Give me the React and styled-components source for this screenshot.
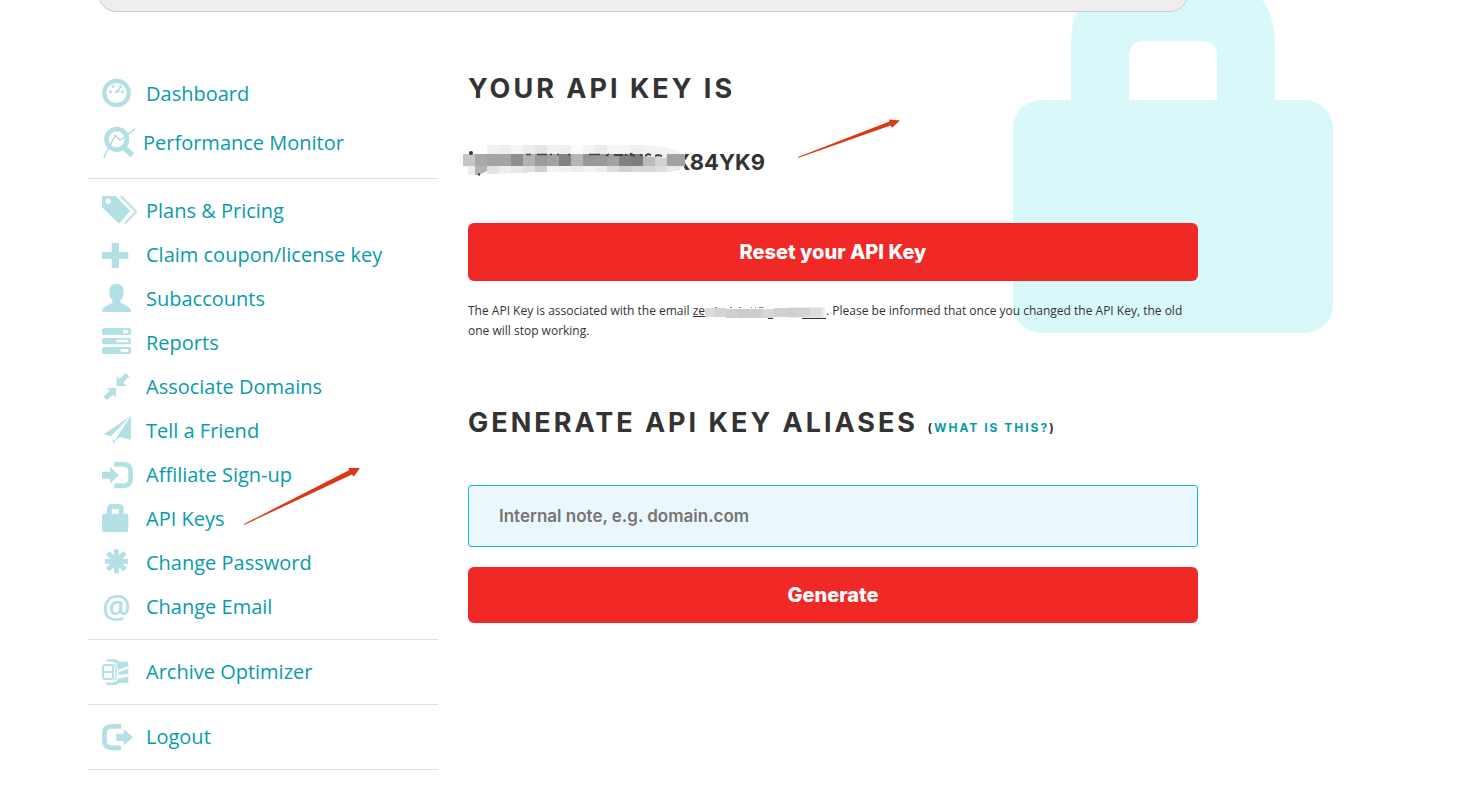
import React from "react";
import styled, { createGlobalStyle } from "styled-components";

const icons = {
  dashboard: (
    <>
      <circle cx="14.5" cy="17" r="12.2" fill="none" stroke="#b2e0e5" strokeWidth="4.2" />
      <circle cx="11" cy="10.5" r="1.5" />
      <circle cx="18.5" cy="10.5" r="1.5" />
      <circle cx="8.6" cy="15.8" r="1.5" />
      <circle cx="20.6" cy="15.8" r="1.5" />
      <path d="M19 10.5 16.6 16.6 13 17.2 13.4 15Z" />
    </>
  ),
  performance: (
    <>
      <path d="M1.7 32.7 13.3 10.3 18 15 21 13.3 33 3.7" fill="none" stroke="#b4cfd3" strokeWidth="1.3" />
      <circle cx="14.7" cy="14.3" r="10.3" fill="none" stroke="#b2e0e5" strokeWidth="4.6" />
      <path d="M22 22.5 30.5 30.3" stroke="#b2e0e5" strokeWidth="5.6" />
    </>
  ),
  tags: (
    <>
      <path
        fillRule="evenodd"
        d="M0 3H13.7L28.2 17.7 17 30.7 0 14ZM6.3 5.7a2.6 2.6 0 1 0 0 5.2 2.6 2.6 0 0 0 0-5.2Z"
      />
      <path d="M17.6 3H20.3L35.3 18.7 23.8 31 22.5 29.8 32.8 18.7Z" />
    </>
  ),
  plus: <path d="M9.7 6H17V15H26.3V22H17V31H9.7V22H0V15H9.7Z" />,
  person: (
    <path d="M14.5 2.7C19 2.7 21.7 5.5 21.7 10.5 21.7 14.5 20.5 17.5 18.5 19.3V21.5L27.5 26.7Q29 28 29 31H0Q0 28 1.5 26.7L10.5 21.5V19.3C8.5 17.5 7.3 14.5 7.3 10.5 7.3 5.5 10 2.7 14.5 2.7Z" />
  ),
  reports: (
    <>
      <rect y="3" width="29" height="7" rx="2" />
      <rect y="13" width="29" height="6.3" rx="2" />
      <rect y="22" width="29" height="7" rx="2" />
      <rect x="21" y="5" width="5.3" height="3.2" rx="0.5" fill="#fff" />
      <rect x="14.3" y="14.8" width="12" height="2.4" rx="0.5" fill="#fff" />
      <rect x="18.7" y="24" width="7.6" height="3" rx="0.5" fill="#fff" />
    </>
  ),
  associate: (
    <>
      <path d="M14.5 7.3 17.5 10 24 4 27.3 7.2 21.2 13.5 24.2 17H14.5Z" />
      <path d="M14 28.5 11 25.5 5 31 1.6 27.8 7.8 22 4.5 19H14Z" />
    </>
  ),
  plane: (
    <>
      <path d="M1.7 21.3 28.7 3 8.8 23.6Z" />
      <path d="M28.7 3V26.7L18 23.7 10.8 30.5V24.5L12.5 28 26.5 7Z" />
      <path d="M28.7 3V26.7L16.2 23Z" />
    </>
  ),
  signup: (
    <>
      <path d="M0 14.7H8V9.7L16.7 18.2 8 26.7V21.7H0Z" />
      <path d="M12.3 7.3H21Q28.6 7.3 28.6 14V22.3Q28.6 28.8 21 28.8H12.3" fill="none" stroke="#b2e0e5" strokeWidth="4.7" />
    </>
  ),
  lock: (
    <path
      fillRule="evenodd"
      d="M2.3 12.7H5V8Q5 3 10 3H16.7Q21.7 3 21.7 8V12.7H24Q26.3 12.7 26.3 15V28.7Q26.3 31 24 31H2.3Q0 31 0 28.7V15Q0 12.7 2.3 12.7ZM9.7 12.7H16.8V9.3Q16.8 8 15.5 8H11Q9.7 8 9.7 9.3Z"
    />
  ),
  asterisk: (
    <path
      d="M14.4 4.3V28.3M2.8 16.3H26M5.8 7.8 23 24.8M23 7.8 5.8 24.8"
      stroke="#b2e0e5"
      strokeWidth="4.8"
    />
  ),
  at: (
    <text x="0" y="29" fontFamily="Open Sans, sans-serif" fontSize="32" fontWeight="600">
      @
    </text>
  ),
  archive: (
    <>
      <rect x="1" y="11" width="10" height="14" rx="2" fill="none" stroke="#b2e0e5" strokeWidth="2" />
      <path d="M1 18H11" stroke="#b2e0e5" strokeWidth="2" />
      <path d="M3.5 7.5 5 5.2H14L17 7.7H26.3V12L16 16 14.5 9 11 7.5Z" />
      <path d="M16.5 18.2 26.3 14.8V20L16.5 20.8Z" />
      <path d="M3.5 28.5 5 31H14L17 29H26.3V22.7L16 24.5 14 28 11 28.6Z" />
      <path d="M12 10 14 12V24L12 26.5" fill="none" stroke="#b2e0e5" strokeWidth="1.4" />
    </>
  ),
  logout: (
    <>
      <path d="M19 7.3H10Q2.4 7.3 2.4 14V22.3Q2.4 28.8 10 28.8H19" fill="none" stroke="#b2e0e5" strokeWidth="4.7" />
      <path d="M14.3 14.7H21.7V10L31 18.2 21.7 26.5V22H14.3Z" />
    </>
  )
};

const account = [
  ["tags", "Plans & Pricing"],
  ["plus", "Claim coupon/license key"],
  ["person", "Subaccounts"],
  ["reports", "Reports"],
  ["associate", "Associate Domains"],
  ["plane", "Tell a Friend"],
  ["signup", "Affiliate Sign-up"],
  ["lock", "API Keys"],
  ["asterisk", "Change Password"],
  ["at", "Change Email"]
];

const keyBlocks = [
  "#c6c6c6", "#a8a8a8", "#a4a4a4", "#a4a4a4", "#8f8f8f", "#b2b2b2",
  "#9b9b9b", "#a2a2a2", "#828282", "#b5b5b5", "#979797", "#989898",
  "#a2a2a2", "#828282", "#7d7d7d", "#bababa", "#d2d2d2", "#a2a2a2"
];

const keyTops = [
  "#f1f1f1", "#ededed", "#f5f5f5", "#ececec", "#e5e5e5", "#f2f2f2", "#eee",
  "#fbfbfb", "#f3f3f3", "#ebebeb", "#f7f7f7", "#f5f5f5", "#eee", "#f2f2f2",
  "#f2f2f2", "#f4f4f4"
];

const keyBottoms = [
  "#ededed", "#b2b2b2", "#e3e3e3", "#eee", "#e9e9e9", "#e0e0e0", "#cfcfcf",
  "#f3f3f3", "#f1f1f1", "#ececec", "#f3f3f3", "#eee", "#dcdcdc", "#d0d0d0",
  "#d8d8d8", "#d6d6d6", "#dedede", "#eaeaea"
];

const mailBlocks = [
  "#dadada", "#d4d4d4", "#cfcfcf", "#cbcbcb", "#cecece",
  "#d6d6d6", "#d0d0d0", "#cfcfcf", "#d3d3d3", "#dedede"
];

function NavItem({ icon, iconWidth, children }) {
  return (
    <li>
      <NavLink href="#">
        <IconSlot $width={iconWidth}>
          <svg width="36" height="36" viewBox="0 0 36 36" fill="#b2e0e5" aria-hidden="true">
            {icons[icon]}
          </svg>
        </IconSlot>
        <NavLabel>{children}</NavLabel>
      </NavLink>
    </li>
  );
}

function KeyMask() {
  return (
    <MaskArt width="222" height="32" viewBox="0 0 222 32" aria-hidden="true">
      <clipPath id="key-brush">
        <path d="M0 10H24V1H180Q216 3 222 12V22Q216 28 198 28H72L24 30V27L16 31H5V23H0Z" />
      </clipPath>
      <g clipPath="url(#key-brush)">
        {keyTops.map((fill, i) => (
          <rect key={i} x={24 + i * 12} y="0" width="12" height="10" fill={fill} />
        ))}
        {keyBlocks.map((fill, i) => (
          <rect key={i} x={i * 12} y="10" width="18" height="12" fill={fill} />
        ))}
        {keyBottoms.map((fill, i) => (
          <rect key={i} x={i * 12} y="22" width="18" height="9" fill={fill} />
        ))}
        <path d="M180 10H204L203 14 180 12Z" fill="#f4f4f4" />
      </g>
      <path
        d="M63 10.5H68M74 10.5H84M87 10.5H89M94 10.5H96M105 10.5H107M126 10.5H137"
        stroke="#444"
        strokeWidth="1.4"
      />
      <path
        d="M143 12 146 10M151 11H160M163 12V10M168 12V10L172 12M178 10V12M182 12 185 10 188 11M192 12 195 11 199 12"
        fill="none"
        stroke="#444"
        strokeWidth="2"
      />
      <circle cx="8" cy="9" r="2" fill="#333" />
      <path d="M15 30.5H17" stroke="#333" strokeWidth="2" />
    </MaskArt>
  );
}

export default function App() {
  return (
    <Page>
      <GlobalStyle />
      <Padlock width="320" height="333" viewBox="0 0 320 333" aria-hidden="true">
        <path
          fillRule="evenodd"
          fill="#d8f8fa"
          d="M28 100H58V42Q58 4 88 -16H234Q262 6 262 42V100H292A28 28 0 0 1 320 128V305A28 28 0 0 1 292 333H28A28 28 0 0 1 0 305V128A28 28 0 0 1 28 100ZM116 100H204V56Q204 41 189 41H131Q116 41 116 56Z"
        />
      </Padlock>
      <Container>
        <Banner />
        <Columns>
          <Sidebar>
            <NavGroup $loose>
              <NavItem icon="dashboard">Dashboard</NavItem>
              <NavItem icon="performance" iconWidth="41px">Performance Monitor</NavItem>
            </NavGroup>
            <NavGroup>
              {account.map(([icon, label]) => (
                <NavItem key={label} icon={icon}>{label}</NavItem>
              ))}
            </NavGroup>
            <NavGroup>
              <NavItem icon="archive">Archive Optimizer</NavItem>
            </NavGroup>
            <NavGroup>
              <NavItem icon="logout">Logout</NavItem>
            </NavGroup>
            <SidebarArrow width="118" height="60" viewBox="0 0 118 60" aria-hidden="true">
              <path d="M1 57 106 3.2 105.5 1H117L110.7 9.7 109 7.5 1 58Z" fill="#dc3912" />
            </SidebarArrow>
          </Sidebar>
          <Main>
            <Title>Your API Key is</Title>
            <ApiKey>
              <Masked><KeyMask /></Masked>X84YK9
            </ApiKey>
            <Button type="button" $height="58px">Reset your API Key</Button>
            <Note>
              The API Key is associated with the email{" "}
              <Email>
                ze
                <MailMask>
                  <svg width="121" height="16" viewBox="3 0 121 16" aria-hidden="true">
                    <path
                      d="M13 3.5H15M28 3.5H30M37 3.5H39M49 3.5H50M53 3.5H54M57 3.5H62M94 3.5H95M98 3.5H99"
                      stroke="#888"
                    />
                    <path d="M87 3H123V14H87Z" fill="#ececec" />
                    {mailBlocks.map((fill, i) => (
                      <rect key={i} x={i * 12} y={i > 1 && i < 6 ? 5 : 4} width="12" height="9" fill={fill} />
                    ))}
                    <path d="M100 14.5H124M66 14.5H71" stroke="#333" />
                  </svg>
                </MailMask>
              </Email>
              . Please be informed that once you changed the API Key, the old one will stop working.
            </Note>
            <Title>
              Generate API Key aliases{" "}
              <small>(<a href="#">What is this?</a>)</small>
            </Title>
            <NoteInput type="text" aria-label="Internal note" placeholder="Internal note, e.g. domain.com" />
            <Button type="button" $height="56px">Generate</Button>
            <KeyArrow width="104" height="40" viewBox="0 0 104 40" aria-hidden="true">
              <path d="M1 38 92.5 2.5 92 0.5 103 1.5 95 8.7 93.5 6.5 1 39Z" fill="#dc3912" />
            </KeyArrow>
          </Main>
        </Columns>
      </Container>
    </Page>
  );
}

const GlobalStyle = createGlobalStyle`
  * {
    box-sizing: border-box;
  }

  body {
    margin: 0;
    background: #fff;
    color: #333;
    font-family: "Open Sans", sans-serif;
  }
`;

const Page = styled.div`
  position: relative;
  min-height: 100vh;
  overflow: hidden;
`;

const Padlock = styled.svg`
  position: absolute;
  top: 0;
  left: 1013px;
`;

const Container = styled.div`
  position: relative;
  max-width: 1110px;
  margin-left: 88px;
`;

const Banner = styled.div`
  height: 32px;
  margin: -20px 10px 0;
  background: #efedee;
  border: 1px solid #cccecf;
  border-radius: 0 0 18px 18px;
`;

const Columns = styled.div`
  display: grid;
  grid-template-columns: 350px minmax(0, 1fr);
  gap: 30px;
  padding-top: 58px;
`;

const Sidebar = styled.nav`
  position: relative;
`;

const NavLink = styled.a`
  display: flex;
  align-items: center;
  height: 44px;
  padding-left: 14px;
  color: #089bab;
  font-size: 20px;
  text-decoration: none;
  white-space: nowrap;
`;

const NavLabel = styled.span`
  line-height: 28px;
`;

const NavGroup = styled.ul`
  display: flex;
  flex-direction: column;
  gap: ${p => (p.$loose ? "1px" : "0")};
  margin: 0;
  padding: ${p => (p.$loose ? "0 0 11px" : "10px 0")};
  border-bottom: 1px solid #e2e2e2;
  list-style: none;

  ${NavLink} {
    height: ${p => (p.$loose ? "48px" : "44px")};
  }
`;

const IconSlot = styled.span`
  display: flex;
  flex: none;
  width: ${p => p.$width || "44px"};

  svg {
    flex: none;
    overflow: visible;
  }
`;

const SidebarArrow = styled.svg`
  position: absolute;
  top: 397px;
  left: 155px;
`;

const Main = styled.main`
  position: relative;
  display: flex;
  flex-direction: column;
`;

const Title = styled.h2`
  margin: 0;
  font-family: Inter, sans-serif;
  font-size: 27px;
  font-weight: 700;
  line-height: 38px;
  letter-spacing: 3px;
  text-transform: uppercase;

  small {
    font-size: 12px;
    line-height: 1;
    letter-spacing: 2px;
  }

  a {
    color: #089bab;
    text-decoration: none;
  }
`;

const ApiKey = styled.p`
  display: flex;
  margin: 36px 0 43px;
  font-family: Inter, sans-serif;
  font-size: 22px;
  font-weight: 700;
  line-height: 36px;
`;

const Masked = styled.span`
  position: relative;
  width: 206px;
`;

const MaskArt = styled.svg`
  position: absolute;
  top: 0;
  left: -5px;
`;

const Button = styled.button`
  height: ${p => p.$height};
  border: 0;
  border-radius: 6px;
  background: #f02826;
  color: #fff;
  font-family: Inter, sans-serif;
  font-size: 20px;
  font-weight: 800;
  cursor: pointer;
`;

const Note = styled.p`
  margin: 20px 0 63px;
  font-size: 12px;
  line-height: 20px;
`;

const Email = styled.span`
  text-decoration: underline;
`;

const MailMask = styled.span`
  display: inline-block;
  height: 16px;
  vertical-align: middle;
`;

const NoteInput = styled.input`
  height: 62px;
  margin: 43px 0 20px;
  padding: 0 30px;
  border: 1px solid #16bcc8;
  border-radius: 3px;
  background: #eaf8fd;
  font-family: Inter, sans-serif;
  font-size: 17px;
  font-weight: 600;

  &::placeholder {
    color: #757575;
  }
`;

const KeyArrow = styled.svg`
  position: absolute;
  top: 49px;
  left: 329px;
`;
